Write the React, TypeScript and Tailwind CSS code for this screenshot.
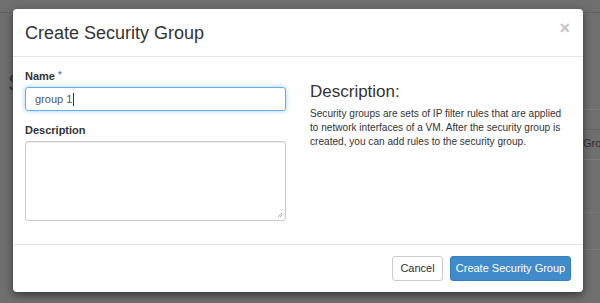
import React from "react";

export default function App() {
  return (
    <div className="relative w-[600px] h-[303px] overflow-hidden bg-[#6f6f6f] font-['Liberation_Sans',Arial,sans-serif]">
      {/* underlying page (dimmed) */}
      <div className="flex flex-col">
        <div className="h-[13px] border-b border-[#616161]" />
        <div className="flex">
          <div className="w-[13px] pt-[58px] pl-[8px] text-[24px] leading-none text-[#3a3a3a]">S</div>
          <div className="flex-1" />
          <div className="w-[17px] flex flex-col pt-[96px]">
            <div className="h-[20px] border-t border-[#7b7b7b]" />
            <div className="h-[30px] border-t border-[#636363] text-[11px] leading-[26px] text-[#2e2e2e] whitespace-nowrap">Grou</div>
            <div className="h-[53px] border-t border-[#7b7b7b]" />
            <div className="h-[37px] border-t border-[#7b7b7b]" />
            <div className="border-t border-[#7b7b7b]" />
          </div>
        </div>
      </div>

      {/* modal */}
      <div className="absolute left-[13px] top-[9px] w-[570px] h-[283px] bg-white rounded-[4px] shadow-[0_3px_9px_rgba(0,0,0,0.5)] flex flex-col">
        <div className="h-[48px] border-b border-[#e5e5e5] flex items-center justify-between pl-[12px] pr-[12px]">
          <h4 className="text-[18px] text-[#333] leading-none pt-[1px]">Create Security Group</h4>
          <span className="text-[18px] font-bold text-[#c4c4c4] leading-none -mt-[10px] mr-[1px]">×</span>
        </div>
        <div className="flex-1 flex px-[12px] pt-[12px] gap-[24px]">
          <div className="w-[261px] flex flex-col">
            <label className="text-[11px] font-bold text-[#333] leading-[14px]">
              Name <span className="text-[#428bca] text-[9px] align-top relative -top-[2px]">*</span>
            </label>
            <div className="mt-[4px] h-[24px] rounded-[3px] border border-[#66afe9] shadow-[0_0_5px_rgba(102,175,233,0.6)] flex items-center pl-[9px] text-[11px] text-[#555]">
              group 1<span className="inline-block w-px h-[13px] bg-[#333] ml-[1px]" />
            </div>
            <label className="mt-[12px] text-[11px] font-bold text-[#333] leading-[14px]">Description</label>
            <div className="relative mt-[4px] h-[80px] rounded-[3px] border border-[#ccc] shadow-[inset_0_1px_1px_rgba(0,0,0,0.075)]">
              <svg className="absolute right-[2px] bottom-[2px]" width="6" height="6" viewBox="0 0 6 6">
                <path d="M5 1L1 5M5 3L3 5" stroke="#999" strokeWidth="0.8" />
              </svg>
            </div>
          </div>
          <div className="flex-1 pt-[13px]">
            <h3 className="text-[17px] text-[#333] leading-[20px]">Description:</h3>
            <p className="mt-[5px] text-[10.1px] leading-[14px] text-[#333] whitespace-nowrap">
              Security groups are sets of IP filter rules that are applied
              <br />
              to network interfaces of a VM. After the security group is
              <br />
              created, you can add rules to the security group.
            </p>
          </div>
        </div>
        <div className="h-[48px] border-t border-[#e5e5e5] flex items-center justify-end gap-[7px] pr-[12px]">
          <button className="h-[25px] w-[51px] rounded-[3px] border border-[#ccc] bg-white text-[11px] text-[#333]">Cancel</button>
          <button className="h-[25px] w-[121px] rounded-[3px] border border-[#357ebd] bg-[#428bca] text-[11px] text-white">Create Security Group</button>
        </div>
      </div>
    </div>
  );
}
